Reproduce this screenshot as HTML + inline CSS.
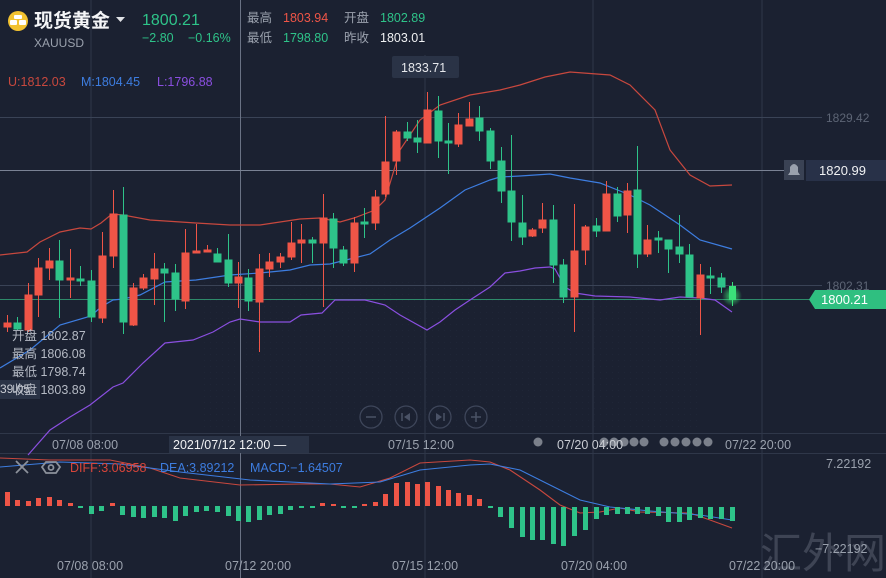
<!DOCTYPE html>
<html><head><meta charset="utf-8"><style>
html,body{margin:0;padding:0;background:#1b2131;}
body{width:886px;height:578px;overflow:hidden;position:relative;font-family:"Liberation Sans","Noto Sans CJK SC",sans-serif;}
svg{position:absolute;left:0;top:0;}
text{font-family:"Liberation Sans","Noto Sans CJK SC",sans-serif;}
</style></head><body>
<svg width="886" height="578" viewBox="0 0 886 578" xmlns="http://www.w3.org/2000/svg">
<defs>
<pattern id="grid" width="6" height="6" patternUnits="userSpaceOnUse"><rect width="6" height="6" fill="#1b2131"/><rect width="1" height="1" fill="#222a3b"/></pattern>
<radialGradient id="glow"><stop offset="0" stop-color="#3cff7a" stop-opacity="0.8"/><stop offset="1" stop-color="#3cff7a" stop-opacity="0"/></radialGradient>
</defs>
<rect width="886" height="578" fill="#1b2131"/>
<rect x="200" y="280" width="500" height="150" fill="url(#grid)" opacity="0.6"/>
<!-- grid lines -->
<g stroke="#2f3749" stroke-width="1">
<line x1="91" y1="0" x2="91" y2="578"/>
<line x1="425" y1="55" x2="425" y2="578"/>
<line x1="593" y1="0" x2="593" y2="578"/>
<line x1="762" y1="0" x2="762" y2="578"/>
<line x1="0" y1="433.5" x2="886" y2="433.5"/>
<line x1="0" y1="453.5" x2="886" y2="453.5"/>
</g>
<line x1="0" y1="117.5" x2="822" y2="117.5" stroke="#3a4356"/>
<line x1="0" y1="285.5" x2="822" y2="285.5" stroke="#3a4356"/>
<line x1="0" y1="299.5" x2="810" y2="299.5" stroke="#2e8a6a"/>
<!-- crosshair -->
<line x1="240.5" y1="0" x2="240.5" y2="578" stroke="#6a7284"/>
<line x1="0" y1="170.5" x2="784" y2="170.5" stroke="#7a8294"/>
<!-- bollinger -->
<polyline fill="none" stroke="#c8483e" stroke-width="1.2" points="0,255 27,252 40,242 60,232 80,228 91,229 101,223 112,214 123,215 150,220 196,223 230,225 260,225 280,222 300,219 320,218 340,222 354,218 375,210 385,200 400,150 420,120 440,105 470,95 500,90 520,85 545,77 570,72 610,75 630,85 655,110 670,150 690,175 710,186 732,185"/>
<polyline fill="none" stroke="#3d7de0" stroke-width="1.2" points="0,368 30,350 60,325 91,316 101,307 113,300 123,299 140,295 165,282 196,280 230,275 260,273 290,270 310,265 330,264 354,258 370,254 390,240 410,228 440,208 465,190 490,180 500,177 520,176 550,174 570,178 600,183 630,195 650,205 680,225 700,240 732,249"/>
<polyline fill="none" stroke="#8a4fe0" stroke-width="1.2" points="28,455 50,430 70,417 90,405 113,387 123,383 143,363 165,343 193,340 213,332 230,322 240,319 260,322 290,322 301,315 322,313 335,300 365,300 385,305 400,315 427,330 440,322 455,310 470,300 490,287 505,273 520,271 535,268 550,267 555,269 565,287 575,293 595,296 630,297 660,300 680,297 700,298 715,300 732,312"/>
<!-- candles red -->
<g fill="#ef5547" stroke="#ef5547" stroke-width="1">
<line x1="7.5" y1="315" x2="7.5" y2="332"/><rect x="4" y="323" width="7" height="4"/>
<line x1="28.5" y1="283" x2="28.5" y2="332"/><rect x="25" y="295" width="7" height="35"/>
<line x1="38.5" y1="258" x2="38.5" y2="317"/><rect x="35" y="268" width="7" height="27"/>
<line x1="49.5" y1="248" x2="49.5" y2="280"/><rect x="46" y="261" width="7" height="7"/>
<line x1="70.5" y1="249" x2="70.5" y2="298"/><rect x="67" y="278" width="7" height="2"/>
<line x1="102.5" y1="232" x2="102.5" y2="323"/><rect x="99" y="256" width="7" height="62"/>
<line x1="113.5" y1="190" x2="113.5" y2="268"/><rect x="110" y="214" width="7" height="42"/>
<line x1="133.5" y1="283" x2="133.5" y2="326"/><rect x="130" y="288" width="7" height="37"/>
<line x1="143.5" y1="274" x2="143.5" y2="290"/><rect x="140" y="278" width="7" height="10"/>
<line x1="154.5" y1="253" x2="154.5" y2="305"/><rect x="151" y="269" width="7" height="10"/>
<line x1="185.5" y1="229" x2="185.5" y2="309"/><rect x="182" y="253" width="7" height="48"/>
<line x1="196.5" y1="224" x2="196.5" y2="253"/><rect x="193" y="251" width="7" height="2"/>
<line x1="207.5" y1="245" x2="207.5" y2="252"/><rect x="204" y="250" width="7" height="2"/>
<line x1="238.5" y1="262" x2="238.5" y2="308"/><rect x="235" y="277" width="7" height="6"/>
<line x1="259.5" y1="254" x2="259.5" y2="352"/><rect x="256" y="269" width="7" height="33"/>
<line x1="269.5" y1="253" x2="269.5" y2="277"/><rect x="266" y="262" width="7" height="7"/>
<line x1="280.5" y1="253" x2="280.5" y2="268"/><rect x="277" y="257" width="7" height="5"/>
<line x1="291.5" y1="222" x2="291.5" y2="260"/><rect x="288" y="243" width="7" height="14"/>
<line x1="301.5" y1="224" x2="301.5" y2="263"/><rect x="298" y="240" width="7" height="3"/>
<line x1="323.5" y1="194" x2="323.5" y2="307"/><rect x="320" y="218" width="7" height="25"/>
<line x1="354.5" y1="217" x2="354.5" y2="272"/><rect x="351" y="223" width="7" height="40"/>
<line x1="375.5" y1="190" x2="375.5" y2="230"/><rect x="372" y="197" width="7" height="26"/>
<line x1="385.5" y1="116" x2="385.5" y2="197"/><rect x="382" y="162" width="7" height="32"/>
<line x1="396.5" y1="130" x2="396.5" y2="175"/><rect x="393" y="132" width="7" height="29"/>
<line x1="427.5" y1="92" x2="427.5" y2="143"/><rect x="424" y="110" width="7" height="33"/>
<line x1="458.5" y1="113" x2="458.5" y2="147"/><rect x="455" y="125" width="7" height="19"/>
<line x1="469.5" y1="102" x2="469.5" y2="126"/><rect x="466" y="119" width="7" height="7"/>
<line x1="532.5" y1="228" x2="532.5" y2="237"/><rect x="529" y="230" width="7" height="6"/>
<line x1="542.5" y1="203" x2="542.5" y2="233"/><rect x="539" y="220" width="7" height="8"/>
<line x1="574.5" y1="204" x2="574.5" y2="332"/><rect x="571" y="251" width="7" height="46"/>
<line x1="585.5" y1="225" x2="585.5" y2="265"/><rect x="582" y="227" width="7" height="23"/>
<line x1="606.5" y1="181" x2="606.5" y2="231"/><rect x="603" y="194" width="7" height="37"/>
<line x1="627.5" y1="183" x2="627.5" y2="233"/><rect x="624" y="191" width="7" height="24"/>
<line x1="647.5" y1="225" x2="647.5" y2="257"/><rect x="644" y="240" width="7" height="14"/>
<line x1="700.5" y1="264" x2="700.5" y2="335"/><rect x="697" y="275" width="7" height="23"/>
</g>
<!-- candles green -->
<g fill="#2ec389" stroke="#2ec389" stroke-width="1">
<line x1="17.5" y1="317" x2="17.5" y2="330"/><rect x="14" y="323" width="7" height="6"/>
<line x1="59.5" y1="240" x2="59.5" y2="318"/><rect x="56" y="261" width="7" height="19"/>
<line x1="80.5" y1="266" x2="80.5" y2="286"/><rect x="77" y="279" width="7" height="2"/>
<line x1="91.5" y1="270" x2="91.5" y2="322"/><rect x="88" y="281" width="7" height="36"/>
<line x1="123.5" y1="187" x2="123.5" y2="334"/><rect x="120" y="215" width="7" height="107"/>
<line x1="164.5" y1="263" x2="164.5" y2="322"/><rect x="161" y="269" width="7" height="4"/>
<line x1="175.5" y1="264" x2="175.5" y2="311"/><rect x="172" y="273" width="7" height="26"/>
<line x1="217.5" y1="248" x2="217.5" y2="262"/><rect x="214" y="254" width="7" height="8"/>
<line x1="228.5" y1="234" x2="228.5" y2="287"/><rect x="225" y="260" width="7" height="23"/>
<line x1="248.5" y1="269" x2="248.5" y2="311"/><rect x="245" y="278" width="7" height="23"/>
<line x1="312.5" y1="237" x2="312.5" y2="263"/><rect x="309" y="240" width="7" height="3"/>
<line x1="333.5" y1="213" x2="333.5" y2="268"/><rect x="330" y="219" width="7" height="29"/>
<line x1="343.5" y1="246" x2="343.5" y2="266"/><rect x="340" y="250" width="7" height="13"/>
<line x1="364.5" y1="208" x2="364.5" y2="238"/><rect x="361" y="222" width="7" height="2"/>
<line x1="407.5" y1="122" x2="407.5" y2="141"/><rect x="404" y="132" width="7" height="6"/>
<line x1="417.5" y1="120" x2="417.5" y2="153"/><rect x="414" y="138" width="7" height="4"/>
<line x1="438.5" y1="96" x2="438.5" y2="158"/><rect x="435" y="111" width="7" height="30"/>
<line x1="448.5" y1="123" x2="448.5" y2="174"/><rect x="445" y="141" width="7" height="2"/>
<line x1="479.5" y1="106" x2="479.5" y2="141"/><rect x="476" y="118" width="7" height="13"/>
<line x1="490.5" y1="128" x2="490.5" y2="169"/><rect x="487" y="131" width="7" height="30"/>
<line x1="501.5" y1="147" x2="501.5" y2="203"/><rect x="498" y="161" width="7" height="30"/>
<line x1="511.5" y1="135" x2="511.5" y2="241"/><rect x="508" y="191" width="7" height="31"/>
<line x1="522.5" y1="195" x2="522.5" y2="245"/><rect x="519" y="223" width="7" height="14"/>
<line x1="553.5" y1="205" x2="553.5" y2="283"/><rect x="550" y="220" width="7" height="45"/>
<line x1="563.5" y1="259" x2="563.5" y2="303"/><rect x="560" y="265" width="7" height="32"/>
<line x1="596.5" y1="218" x2="596.5" y2="237"/><rect x="593" y="226" width="7" height="5"/>
<line x1="617.5" y1="187" x2="617.5" y2="222"/><rect x="614" y="194" width="7" height="22"/>
<line x1="637.5" y1="146" x2="637.5" y2="268"/><rect x="634" y="190" width="7" height="64"/>
<line x1="658.5" y1="231" x2="658.5" y2="253"/><rect x="655" y="238" width="7" height="2"/>
<line x1="668.5" y1="240" x2="668.5" y2="273"/><rect x="665" y="240" width="7" height="9"/>
<line x1="679.5" y1="215" x2="679.5" y2="263"/><rect x="676" y="247" width="7" height="7"/>
<line x1="689.5" y1="244" x2="689.5" y2="297"/><rect x="686" y="255" width="7" height="42"/>
<line x1="710.5" y1="267" x2="710.5" y2="294"/><rect x="707" y="276" width="7" height="2"/>
<line x1="721.5" y1="273" x2="721.5" y2="293"/><rect x="718" y="278" width="7" height="9"/>
</g>
<circle cx="732" cy="296" r="10" fill="url(#glow)"/>
<line x1="732.5" y1="282" x2="732.5" y2="306" stroke="#3be07a"/><rect x="729" y="286" width="7" height="14" fill="#3be07a"/>

<!-- header -->
<circle cx="18" cy="21" r="10" fill="#f2c230"/>
<g fill="#fff"><rect x="14" y="15" width="8" height="4" rx="1"/><rect x="10" y="20" width="7" height="5" rx="1"/><rect x="19" y="20" width="7" height="5" rx="1"/></g>
<text x="34" y="27" font-size="19" font-weight="bold" fill="#f4f5f7">现货黄金</text>
<path d="M116 17 L125 17 L120.5 22 Z" fill="#e0e2e6"/>
<text x="34" y="47" font-size="12" fill="#9aa1ad">XAUUSD</text>
<text x="142" y="25" font-size="16" fill="#2ec389">1800.21</text>
<text x="142" y="42" font-size="12.5" fill="#2ec389">−2.80</text>
<text x="188" y="42" font-size="12.5" fill="#2ec389">−0.16%</text>
<g font-size="12.5">
<text x="247" y="22" fill="#9aa1ad">最高</text><text x="283" y="22" fill="#ef5547">1803.94</text>
<text x="344" y="22" fill="#9aa1ad">开盘</text><text x="380" y="22" fill="#2ec389">1802.89</text>
<text x="247" y="42" fill="#9aa1ad">最低</text><text x="283" y="42" fill="#2ec389">1798.80</text>
<text x="344" y="42" fill="#9aa1ad">昨收</text><text x="380" y="42" fill="#f0f1f3">1803.01</text>
</g>
<g font-size="12.5">
<text x="8" y="86" fill="#c8483e">U:1812.03</text>
<text x="81" y="86" fill="#3d7de0">M:1804.45</text>
<text x="157" y="86" fill="#8a4fe0">L:1796.88</text>
</g>
<rect x="392" y="56" width="67" height="22" rx="2" fill="#2a3346"/>
<text x="401" y="72" font-size="12.5" fill="#e6e8ec">1833.71</text>

<!-- right labels -->
<text x="826" y="122" font-size="12" fill="#5d6575">1829.42</text>
<text x="826" y="290" font-size="12" fill="#5d6575">1802.31</text>
<rect x="784" y="160" width="20" height="20" fill="#3a4254"/>
<path d="M788 175 L800 175 L798 172 L798 167 Q794 161 790 167 L790 172 Z" fill="#9aa1ad"/>
<rect x="806" y="160" width="80" height="21" fill="#283148"/>
<text x="819" y="175" font-size="13" fill="#f0f1f3">1820.99</text>
<path d="M815 290 L886 290 L886 309 L815 309 L809 299.5 Z" fill="#2fbf80"/>
<text x="821" y="304" font-size="13" fill="#fff">1800.21</text>

<!-- OHLC overlay -->
<rect x="0" y="380" width="40" height="19" fill="#2a3346"/>
<text x="0" y="393" font-size="12" fill="#c9ccd3">39.05</text>
<g font-size="12.5" fill="#b5bac4">
<text x="12" y="340">开盘 1802.87</text>
<text x="12" y="358">最高 1806.08</text>
<text x="12" y="376">最低 1798.74</text>
<text x="12" y="394">收盘 1803.89</text>
</g>

<!-- zoom controls -->
<g fill="none" stroke="#3e465a" stroke-width="1.3">
<circle cx="371" cy="417" r="11"/><circle cx="406" cy="417" r="11"/><circle cx="440" cy="417" r="11"/><circle cx="476" cy="417" r="11"/>
</g>
<g fill="#4a5266" stroke="#4a5266" stroke-width="1.5">
<line x1="366" y1="417" x2="376" y2="417"/>
<line x1="471" y1="417" x2="481" y2="417"/><line x1="476" y1="412" x2="476" y2="422"/>
<line x1="402" y1="413" x2="402" y2="421"/><path d="M410 413 L404 417 L410 421 Z" stroke="none"/>
<line x1="444" y1="413" x2="444" y2="421"/><path d="M436 413 L442 417 L436 421 Z" stroke="none"/>
</g>

<!-- x axis -->
<g font-size="12.5" fill="#9aa1ad">
<text x="52" y="449">07/08 08:00</text>
<text x="388" y="449">07/15 12:00</text>
<text x="725" y="449">07/22 20:00</text>
</g>
<rect x="169" y="436" width="140" height="17" fill="#2a3346"/>
<text x="173" y="449" font-size="12.5" fill="#f0f1f3">2021/07/12 12:00 —</text>
<g fill="#8c919b" opacity="0.85">
<circle cx="538" cy="442" r="4.5"/>
<circle cx="604" cy="442" r="4.5"/><circle cx="614" cy="442" r="4.5"/><circle cx="624" cy="442" r="4.5"/><circle cx="634" cy="442" r="4.5"/><circle cx="644" cy="442" r="4.5"/>
<circle cx="664" cy="442" r="4.5"/><circle cx="675" cy="442" r="4.5"/><circle cx="686" cy="442" r="4.5"/><circle cx="697" cy="442" r="4.5"/><circle cx="708" cy="442" r="4.5"/>
</g>
<text x="557" y="449" font-size="12.5" fill="#c9ccd3">07/20 04:00</text>

<!-- MACD -->
<polyline fill="none" stroke="#c8483e" stroke-width="1.1" points="0,458 50,460 110,460 150,468 180,478 240,485 300,484 330,484 360,487 390,478 420,463 470,460 490,462 510,470 540,490 560,505 580,513 600,512 620,508 640,512 690,513 710,520 732,528"/>
<polyline fill="none" stroke="#3d7de0" stroke-width="1.1" points="0,467 60,462 120,464 180,472 250,480 330,484 380,482 420,470 470,465 490,464 520,470 550,485 580,500 610,507 650,511 700,515 732,520"/>
<g fill="#ef5547">
<rect x="5" y="492" width="5" height="14"/><rect x="15" y="500" width="5" height="6"/><rect x="26" y="501" width="5" height="5"/><rect x="36" y="498" width="5" height="8"/><rect x="47" y="497" width="5" height="9"/><rect x="57" y="500" width="5" height="6"/><rect x="68" y="503" width="5" height="3"/>
<rect x="110" y="503" width="5" height="3"/><rect x="320" y="503" width="5" height="3"/><rect x="331" y="504" width="5" height="2"/><rect x="362" y="504" width="5" height="2"/><rect x="373" y="502" width="5" height="4"/>
<rect x="383" y="494" width="5" height="12"/><rect x="394" y="483" width="5" height="23"/><rect x="405" y="482" width="5" height="24"/><rect x="415" y="484" width="5" height="22"/><rect x="425" y="482" width="5" height="24"/><rect x="436" y="486" width="5" height="20"/><rect x="446" y="490" width="5" height="16"/><rect x="456" y="493" width="5" height="13"/><rect x="467" y="495" width="5" height="11"/><rect x="477" y="499" width="5" height="7"/>
</g>
<g fill="#2ec389">
<rect x="78" y="506" width="5" height="2"/><rect x="89" y="506" width="5" height="8"/><rect x="99" y="506" width="5" height="5"/><rect x="120" y="506" width="5" height="9"/><rect x="131" y="506" width="5" height="11"/><rect x="141" y="506" width="5" height="12"/><rect x="152" y="506" width="5" height="11"/><rect x="162" y="506" width="5" height="12"/><rect x="173" y="506" width="5" height="15"/><rect x="183" y="506" width="5" height="10"/><rect x="194" y="506" width="5" height="6"/><rect x="204" y="506" width="5" height="5"/><rect x="215" y="506" width="5" height="6"/><rect x="226" y="506" width="5" height="10"/><rect x="236" y="506" width="5" height="15"/><rect x="246" y="506" width="5" height="16"/><rect x="257" y="506" width="5" height="14"/><rect x="267" y="506" width="5" height="9"/><rect x="278" y="506" width="5" height="8"/><rect x="288" y="506" width="5" height="4"/><rect x="299" y="506" width="5" height="2"/><rect x="310" y="506" width="5" height="2"/><rect x="341" y="506" width="5" height="2"/><rect x="352" y="506" width="5" height="2"/>
<rect x="488" y="506" width="5" height="2"/><rect x="498" y="507" width="5" height="10"/><rect x="509" y="507" width="5" height="21"/><rect x="520" y="507" width="5" height="30"/><rect x="530" y="507" width="5" height="33"/><rect x="540" y="507" width="5" height="33"/><rect x="551" y="507" width="5" height="37"/><rect x="561" y="507" width="5" height="39"/><rect x="572" y="507" width="5" height="29"/><rect x="583" y="507" width="5" height="23"/><rect x="594" y="507" width="5" height="12"/><rect x="604" y="507" width="5" height="8"/><rect x="615" y="507" width="5" height="7"/><rect x="625" y="507" width="5" height="7"/><rect x="635" y="507" width="5" height="7"/><rect x="645" y="507" width="5" height="7"/><rect x="656" y="507" width="5" height="9"/><rect x="666" y="507" width="5" height="15"/><rect x="677" y="507" width="5" height="15"/><rect x="687" y="507" width="5" height="13"/><rect x="698" y="507" width="5" height="11"/><rect x="708" y="507" width="5" height="12"/><rect x="719" y="507" width="5" height="12"/><rect x="730" y="507" width="5" height="14"/>
</g>
<g stroke="#8c919b" stroke-width="1.8" fill="none">
<line x1="16" y1="461" x2="28" y2="473"/><line x1="28" y1="461" x2="16" y2="473"/>
<path d="M46 462 L56 462 L60 467 L56 473 L46 473 L42 467 Z"/><circle cx="51" cy="467.5" r="2.5"/>
</g>
<g font-size="12.5">
<text x="70" y="472" fill="#d9453a">DIFF:3.06958</text>
<text x="160" y="472" fill="#3d7de0">DEA:3.89212</text>
<text x="250" y="472" fill="#3d7de0">MACD:−1.64507</text>
</g>
<text x="826" y="468" font-size="12.5" fill="#9aa1ad">7.22192</text>
<text x="760" y="568" font-size="42" fill="#4a5060" opacity="0.75" font-family="Liberation Serif,'Noto Serif CJK SC',serif">汇外网</text>
<text x="815" y="553" font-size="12.5" fill="#9aa1ad">−7.22192</text>
<g font-size="12.5" fill="#9aa1ad">
<text x="57" y="570">07/08 08:00</text>
<text x="225" y="570">07/12 20:00</text>
<text x="392" y="570">07/15 12:00</text>
<text x="561" y="570">07/20 04:00</text>
<text x="729" y="570">07/22 20:00</text>
</g>
</svg>
</body></html>
